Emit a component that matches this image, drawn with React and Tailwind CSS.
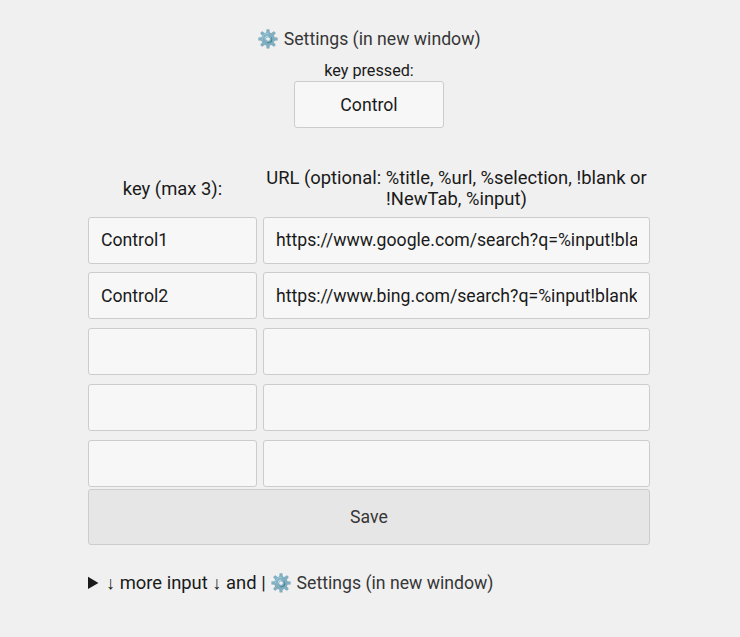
const rows = [
  ["Control1", "https://www.google.com/search?q=%input!blank"],
  ["Control2", "https://www.bing.com/search?q=%input!blank"],
  ["", ""],
  ["", ""],
  ["", ""],
];

const field =
  "block h-[47px] rounded-[3px] border border-[#cccccc] bg-[#f7f7f7] px-3 text-[17.66px] text-[#1a1a1a] outline-none";

function Settings() {
  return (
    <a className="text-[17.66px] text-[#363636]">
      <span>⚙️</span> Settings (in new window)
    </a>
  );
}

export default function App() {
  return (
    <main className="flex h-[637px] w-[740px] flex-col items-start bg-[#f0f0f0] pl-[88px] pt-[29px] font-['Roboto',sans-serif] text-[18.4px] leading-[21px] text-[#1a1a1a]">
      <div className="flex w-[562px] flex-col items-center">
        <Settings />
        <label className="mt-[10px] text-[16.2px]">key pressed:</label>
        <input readOnly value="Control" className={`${field} w-[150px] text-center`} />
      </div>
      <div className="mt-[39px] grid w-[562px] grid-cols-[169px_387px] gap-x-[6px]">
        <div className="flex h-[42px] items-center justify-center">key (max 3):</div>
        <div className="text-center">URL (optional: %title, %url, %selection, !blank or !NewTab, %input)</div>
      </div>
      <div className="mt-[7.6px] flex flex-col gap-[8.75px]">
        {rows.map(([key, url], i) => (
          <div key={i} className="flex gap-[6px]">
            <input readOnly value={key} className={`${field} w-[169px] ${i === 0 ? "pb-px" : "pt-px"}`} />
            <input readOnly value={url} className={`${field} w-[387px] ${i === 0 ? "pb-px" : "pt-px"}`} />
          </div>
        ))}
      </div>
      <button className="mt-[2.4px] h-[56px] w-[562px] rounded-[3px] border border-[#cccccc] bg-[#e6e6e6] pt-px text-[17.66px] text-[#363636]">Save</button>
      <details className="mt-[27px]">
        <summary><span className="-ml-[1.6px]">↓ more input ↓ and | <Settings /></span></summary>
      </details>
    </main>
  );
}
